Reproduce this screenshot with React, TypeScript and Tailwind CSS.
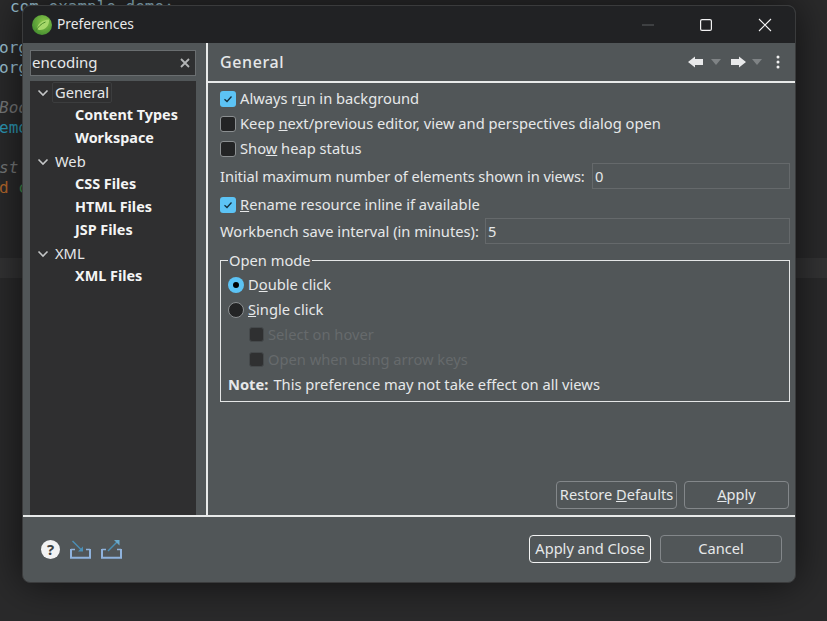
import type { ReactNode } from 'react'

const font = { fontFamily: '"Noto Sans", sans-serif' }

function Check({ checked, disabled }: { checked?: boolean; disabled?: boolean }) {
  if (checked) {
    return (
      <span className="flex h-4 w-4 shrink-0 items-center justify-center rounded-[3px] bg-[#5cc3f5]">
        <svg viewBox="0 0 16 16" className="h-4 w-4" fill="none" stroke="#14303f" strokeWidth="1.3">
          <path d="M4.500 8.200 7 10.500 11.500 5.500" />
        </svg>
      </span>
    )
  }
  return (
    <span
      className={
        disabled
          ? 'h-[15px] w-[15px] shrink-0 rounded-[3px] border border-[#45494b] bg-[#2f3031]'
          : 'h-4 w-4 shrink-0 rounded-[3px] border border-[#8b8f91] bg-[#232425]'
      }
    />
  )
}

function Row({ checked, children }: { checked?: boolean; children: ReactNode }) {
  return (
    <div className="flex h-[25px] items-center gap-[4px]">
      <Check checked={checked} />
      <span>{children}</span>
    </div>
  )
}

function Chevron() {
  return (
    <svg viewBox="0 0 12 8" className="h-2 w-3" fill="none" stroke="#c4c6c7" strokeWidth="1.6">
      <path d="M1.500 1.500 6 6l4.500-4.500" />
    </svg>
  )
}

function TreeParent({ label, focus }: { label: string; focus?: boolean }) {
  return (
    <div className="flex h-[23px] items-center pl-[7px]">
      <Chevron />
      {focus ? (
        <span className="ml-[3px] flex h-[21px] w-[60px] items-center rounded-[2px] border border-[#3c3d3e] pl-[2px]">{label}</span>
      ) : (
        <span className="ml-[6px]">{label}</span>
      )}
    </div>
  )
}

function TreeChild({ label }: { label: string }) {
  return <div className="flex h-[23px] items-center pl-[45px] text-[14.4px] font-bold text-[#f4f5f5]">{label}</div>
}

function Btn({ w, focus, children }: { w: string; focus?: boolean; children: ReactNode }) {
  return (
    <button
      className={`flex h-[28px] items-center justify-center rounded-[4px] border text-[14.6px] text-[#e6e8e9] ${w} ${
        focus ? 'border-[#f2f3f3]' : 'border-[#83878a]'
      }`}
    >
      <span>{children}</span>
    </button>
  )
}

function InBox({ icon }: { icon: 'in' | 'out' }) {
  return (
    <svg viewBox="0 0 21 19" className="h-[19px] w-[21px]" fill="none">
      <path d="M1 9v8.800h19V9" stroke="#8fb2dc" strokeWidth="2" />
      <path d="M1 9.500h4M16 9.500h4" stroke="#8fb2dc" strokeWidth="1.500" />
      {icon === 'in' ? (
        <>
          <path d="M2.500 1l9 9" stroke="#4b8fb5" strokeWidth="1.400" />
          <path d="M13 6.500v5H8z" fill="#4b8fb5" />
        </>
      ) : (
        <>
          <path d="M7 11l9-9" stroke="#4b8fb5" strokeWidth="1.400" />
          <path d="M13 0h5.500v5.500z" fill="#69a9cc" />
        </>
      )}
    </svg>
  )
}

function CodeBackdrop() {
  return (
    <div className="h-[621px] overflow-hidden bg-[#2a2a2b] text-[16px] leading-[20px]" style={{ fontFamily: '"DejaVu Sans Mono", monospace' }}>
      <div className="-mt-[3px] h-[21px] pl-[10px] text-[#9fc6d8]">com.example.demo;</div>
      <div className="h-[20px]" />
      <div className="-ml-px text-[#9fc6d8]">org</div>
      <div className="-ml-px text-[#9fc6d8]">org</div>
      <div className="h-[20px]" />
      <div className="-ml-px italic text-[#77797a]">Boo</div>
      <div className="-ml-px text-[#2d9ab8]">emo</div>
      <div className="h-[20px]" />
      <div className="-ml-px italic text-[#77797a]">st</div>
      <div className="-ml-px text-[#b5682c]">
        d <span className="text-[#3f9150]">c</span>
      </div>
      <div className="mt-[60px] h-[20px] bg-[#333334]" />
    </div>
  )
}

export default function App() {
  return (
    <div className="relative h-[621px] w-[827px] overflow-hidden text-[14.7px] text-[#e6e8e9]" style={font}>
      <CodeBackdrop />

      <div className="absolute left-[22px] top-[5px] flex h-[578px] w-[774px] flex-col overflow-hidden rounded-lg border border-[#3a3b3c] bg-[#515658] shadow-[0_0_40px_rgba(0,0,0,0.65)]">
        <div className="flex h-[37px] shrink-0 items-center bg-[#212224]">
          <svg viewBox="0 0 20 20" className="ml-[9px] h-5 w-5">
            <defs>
              <radialGradient id="ball" cx="60%" cy="35%" r="75%">
                <stop offset="0%" stopColor="#8cc84b" />
                <stop offset="100%" stopColor="#3f8a2e" />
              </radialGradient>
            </defs>
            <circle cx="10" cy="10" r="10" fill="url(#ball)" />
            <path d="M5 14C5.500 8.500 10 5 17 4.500 17.500 11 13 15.500 7 15z" fill="#a6d86a" />
            <path d="M3.500 16.500c2.500-5 6-8 10-9.500" stroke="#4c8c2c" strokeWidth="1" fill="none" />
          </svg>
          <span className="ml-[5px] text-[13.8px] text-[#e8e9ea]">Preferences</span>
          <div className="ml-auto flex items-center">
            <svg viewBox="0 0 12 12" className="mr-[46px] h-3 w-3" stroke="#5c5e60" strokeWidth="1">
              <path d="M0 6h12" />
            </svg>
            <svg viewBox="0 0 12 12" className="mr-[46px] h-3 w-3" fill="none" stroke="#f2f2f2" strokeWidth="1.200">
              <rect x=".6" y=".6" width="10.800" height="10.800" rx="1.500" />
            </svg>
            <svg viewBox="0 0 14 14" className="mr-[23px] h-[14px] w-[14px]" fill="none" stroke="#f2f2f2" strokeWidth="1.100">
              <path d="M1 1l12 12M13 1 1 13" />
            </svg>
          </div>
        </div>

        <div className="flex min-h-0 flex-1">
          <div className="flex w-[183px] shrink-0 flex-col pl-[7px] pr-[10px] pt-[7px]">
            <div className="flex h-[26px] shrink-0 items-center justify-between border border-[#6a6e70] bg-[#2f3031] pb-[2px] pl-px pr-[5px] text-[15px]">
              <span>encoding</span>
              <svg viewBox="0 0 10 10" className="mt-[2px] h-[10px] w-[10px]" stroke="#b3b5b6" strokeWidth="1.800">
                <path d="M1 1l8 8M9 1 1 9" />
              </svg>
            </div>
            <div className="mt-[5px] flex-1 bg-[#2f2f30] leading-none text-[#e6e8e9]">
              <TreeParent label="General" focus />
              <TreeChild label="Content Types" />
              <TreeChild label="Workspace" />
              <TreeParent label="Web" />
              <TreeChild label="CSS Files" />
              <TreeChild label="HTML Files" />
              <TreeChild label="JSP Files" />
              <TreeParent label="XML" />
              <TreeChild label="XML Files" />
            </div>
          </div>

          <div className="flex min-w-0 flex-1 flex-col border-l-2 border-[#e8eaea]">
            <div className="flex h-[40px] shrink-0 items-center border-b-2 border-[#e8eaea] pl-[12px] pr-[15px]">
              <span className="text-[16px] font-medium tracking-[0.6px]">General</span>
              <div className="ml-auto flex items-center">
                <svg viewBox="0 0 16 12" className="h-3 w-4" fill="#e8e9ea">
                  <path d="M0 6l7-5.500V3h8v6H7v2.500z" />
                </svg>
                <svg viewBox="0 0 10 6" className="ml-[7px] h-[6px] w-[10px]" fill="#7f8385">
                  <path d="M0 0h10L5 6z" />
                </svg>
                <svg viewBox="0 0 16 12" className="ml-[9px] h-3 w-4" fill="#e8e9ea">
                  <path d="M16 6 9 .5V3H1v6h8v2.500z" />
                </svg>
                <svg viewBox="0 0 10 6" className="ml-[6px] h-[6px] w-[10px]" fill="#7f8385">
                  <path d="M0 0h10L5 6z" />
                </svg>
                <svg viewBox="0 0 4 14" className="ml-[14px] h-[14px] w-1" fill="#f0f0f0">
                  <circle cx="2" cy="2" r="1.500" />
                  <circle cx="2" cy="7" r="1.500" />
                  <circle cx="2" cy="12" r="1.500" />
                </svg>
              </div>
            </div>

            <div className="flex min-h-0 flex-1 flex-col pl-[12px] pr-[5px] pt-[3px]">
              <Row checked>
                Always r<u>u</u>n in background
              </Row>
              <Row>
                Keep <u>n</u>ext/previous editor, view and perspectives dialog open
              </Row>
              <Row>
                Sho<u>w</u> heap status
              </Row>
              <div className="mt-[2px] flex h-[26px] items-center">
                <span className="w-[372px] shrink-0 tracking-[-0.08px]">Initial maximum number of elements shown in views:</span>
                <div className="flex h-[26px] flex-1 items-center border border-[#65696b] pl-[2px]">0</div>
              </div>
              <div className="mt-[3px]">
                <Row checked>
                  <u>R</u>ename resource inline if available
                </Row>
              </div>
              <div className="mt-px flex h-[26px] items-center">
                <span className="w-[265px] shrink-0">Workbench save interval (in minutes):</span>
                <div className="flex h-[26px] flex-1 items-center border border-[#65696b] pl-[2px]">5</div>
              </div>

              <div className="relative mt-[16px] h-[142px] border border-[#e4e6e6] pl-[7px] pt-[11px]">
                <span className="absolute -top-[11px] left-[7px] bg-[#515658] px-[1px] leading-[20px]">Open mode</span>
                <div className="flex h-[25px] items-center gap-[4px]">
                  <span className="flex h-4 w-4 items-center justify-center rounded-full bg-[#5cc3f5]">
                    <span className="h-[6px] w-[6px] rounded-full bg-black" />
                  </span>
                  <span>
                    D<u>o</u>uble click
                  </span>
                </div>
                <div className="flex h-[25px] items-center gap-[4px]">
                  <span className="h-4 w-4 rounded-full border border-[#8b8f91] bg-[#232425]" />
                  <span>
                    <u>S</u>ingle click
                  </span>
                </div>
                <div className="flex h-[25px] items-center gap-[4px] pl-[21px] text-[#666a6c]">
                  <Check disabled />
                  <span>Select on hover</span>
                </div>
                <div className="flex h-[25px] items-center gap-[4px] pl-[21px] text-[#666a6c]">
                  <Check disabled />
                  <span>Open when using arrow keys</span>
                </div>
                <div className="flex h-[25px] items-center">
                  <b className="mr-[5px]">Note:</b>
                  <span>This preference may not take effect on all views</span>
                </div>
              </div>

              <div className="mb-[6px] mr-px mt-auto flex justify-end gap-[7px]">
                <Btn w="w-[121px]">
                  Restore <u>D</u>efaults
                </Btn>
                <Btn w="w-[105px]">
                  <u>A</u>pply
                </Btn>
              </div>
            </div>
          </div>
        </div>

        <div className="flex h-[67px] shrink-0 items-center border-t-2 border-[#e8eaea] pb-[1px] pl-[18px] pr-[13px]">
          <span className="flex h-[19px] w-[19px] items-center justify-center rounded-full bg-[#f1f2f3] text-[15px] font-bold leading-none text-[#3d4143]">
            ?
          </span>
          <div className="ml-[10px]">
            <InBox icon="in" />
          </div>
          <div className="ml-[10px]">
            <InBox icon="out" />
          </div>
          <div className="ml-auto flex gap-[9px]">
            <Btn w="w-[122px]" focus>
              Apply and Close
            </Btn>
            <Btn w="w-[122px]">Cancel</Btn>
          </div>
        </div>
      </div>
    </div>
  )
}
